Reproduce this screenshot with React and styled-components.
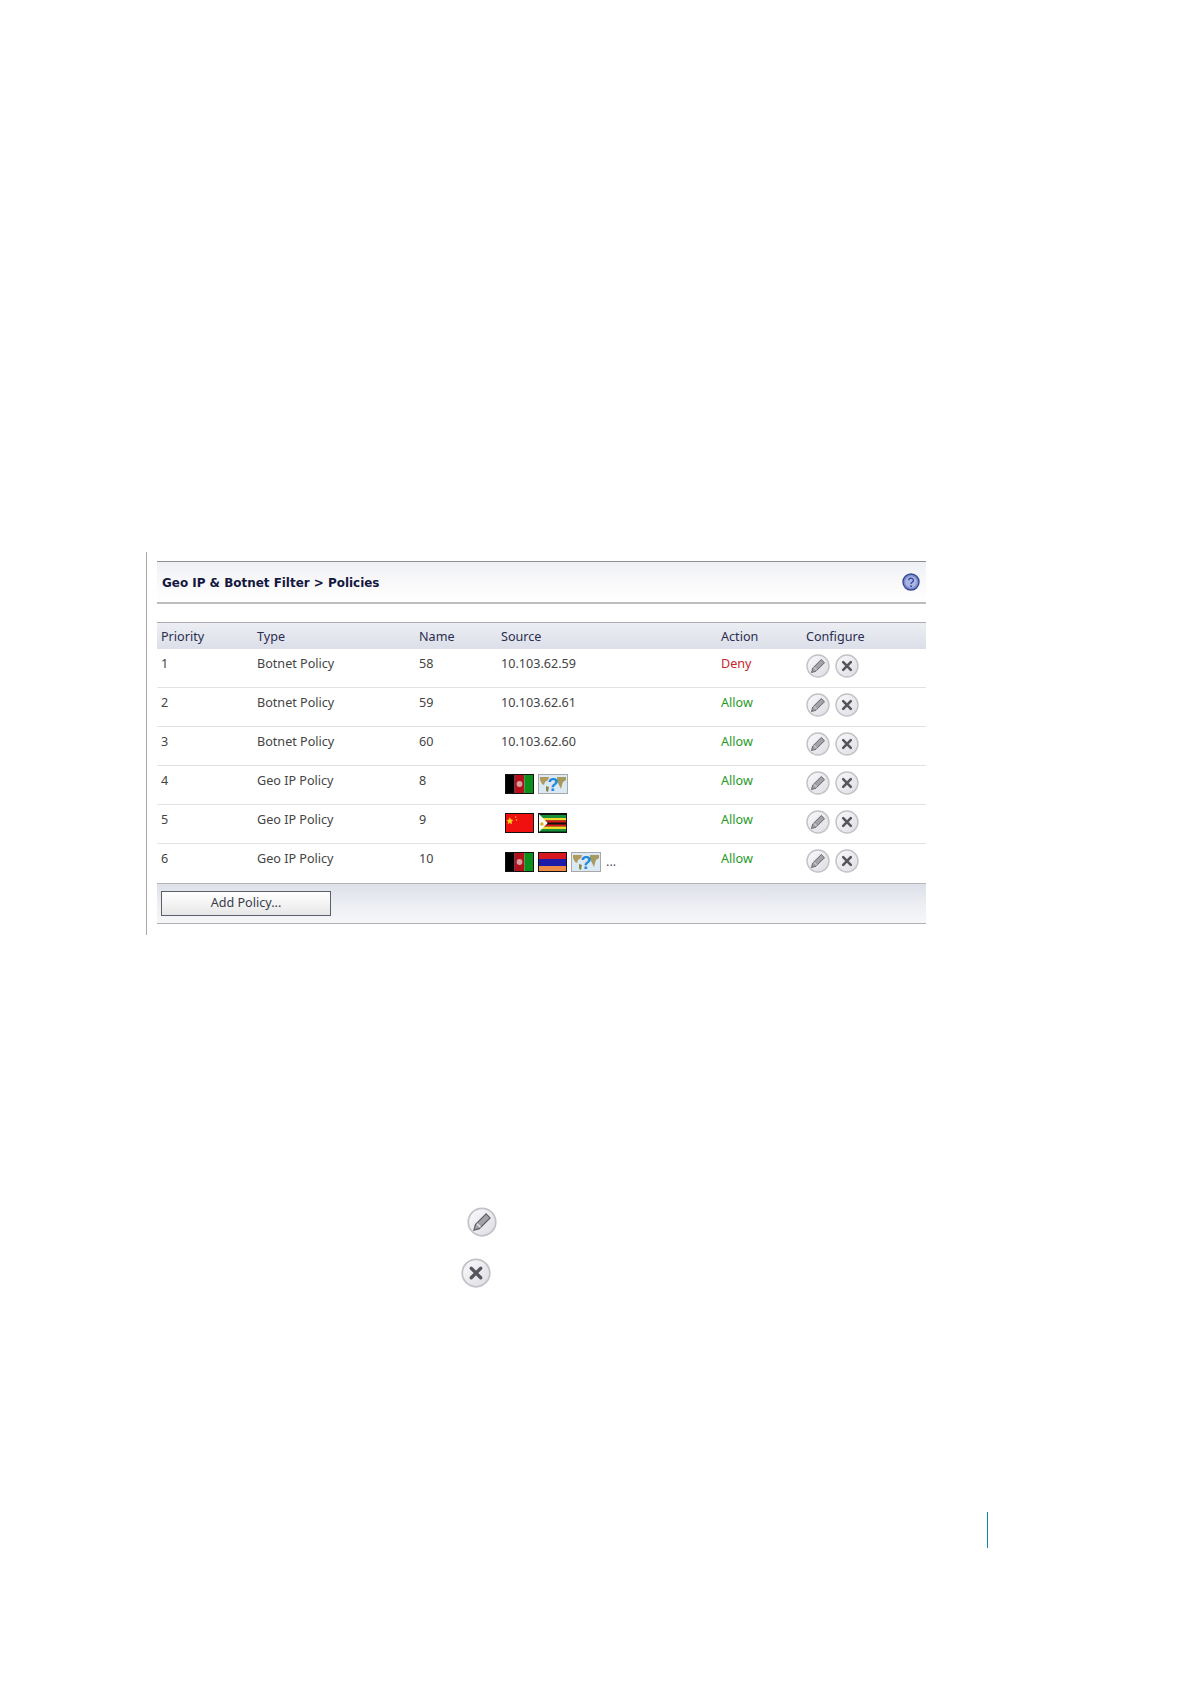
import React from 'react'
import styled, { createGlobalStyle } from 'styled-components'

const GlobalStyle = createGlobalStyle`
  html, body {
    margin: 0;
    background: #fff;
    font-family: 'Noto Sans', 'Open Sans', sans-serif;
  }
`

const Page = styled.div`
  width: 1190px;
  height: 1684px;
  padding-top: 552px;
  box-sizing: border-box;
  display: flex;
  flex-direction: column;
`

const Figure = styled.div`
  margin-left: 146px;
  width: 780px;
  height: 383px;
  padding: 9px 0 0 10px;
  box-sizing: border-box;
  border-left: 1px solid #a9a9a9;
`

const Panel = styled.div`
  width: 769px;
`

const TitleBar = styled.div`
  height: 43px;
  box-sizing: border-box;
  display: flex;
  align-items: center;
  justify-content: space-between;
  padding: 0 6px 0 5px;
  border-top: 1px solid #8f8f93;
  border-bottom: 2px solid #bdbdc0;
  background: linear-gradient(#eef0f5, #f8f8fa 45%, #fff);
`

const Title = styled.h1`
  margin: 2px 0 0;
  font-family: 'DejaVu Sans', sans-serif;
  font-size: 11.95px;
  font-weight: 700;
  color: #14183f;
`

const Table = styled.div`
  margin-top: 18px;
`

const columns = '96px 162px 82px 220px 85px 1fr'

const HeadRow = styled.div`
  display: grid;
  grid-template-columns: ${columns};
  height: 27px;
  align-items: center;
  padding-left: 4px;
  border-top: 1px solid #a9abb2;
  box-sizing: border-box;
  background: linear-gradient(#eceef3, #dcdfe9);
  color: #2b2d50;
  font-size: 12.6px;
`

const Row = styled.div`
  display: grid;
  grid-template-columns: ${columns};
  height: 39px;
  padding: 5px 0 0 4px;
  box-sizing: border-box;
  border-bottom: 1px solid #e2e2e4;
  color: #444;
  font-size: 12.6px;
  line-height: 20px;
  &:last-child {
    border-bottom: 0;
  }
`

const Action = styled.span`
  color: ${p => (p.$deny ? '#c8242c' : '#1f9a1f')};
`

const Flags = styled.div`
  display: flex;
  align-items: center;
  gap: 4px;
  height: 20px;
  margin: 3px 0 0 4px;
`

const Dots = styled.span`
  margin-left: 1px;
  color: #555;
  line-height: 24px;
`

const Icons = styled.div`
  display: flex;
  gap: 5px;
  margin-top: 0;
`

const Footer = styled.div`
  height: 41px;
  box-sizing: border-box;
  display: flex;
  align-items: center;
  padding-left: 4px;
  border-top: 1px solid #b3b5bb;
  border-bottom: 1px solid #b0b0b3;
  background: linear-gradient(#dde0e9, #eef0f4 60%, #f6f6f8);
`

const Button = styled.button`
  width: 170px;
  height: 25px;
  padding: 0 0 2px;
  border: 1px solid #5c6068;
  background: linear-gradient(#fff, #f4f4f4 50%, #e6e6e6);
  color: #3a3c4c;
  font-family: inherit;
  font-size: 12.6px;
  text-align: center;
`

const Legend = styled.div`
  display: flex;
  flex-direction: column;
  margin-top: 272px;
  gap: 21px;
`

const LegendItem = styled.div`
  height: 30px;
  margin-left: ${p => p.$indent}px;
`

const PageRule = styled.div`
  width: 1px;
  height: 36px;
  margin: 224px 0 0 987px;
  border-left: 1px solid #0d8ab0;
`

const CircleIcon = ({ size = 24, children }) => (
  <svg width={size} height={size} viewBox="0 0 24 24">
    <defs>
      <linearGradient id="disc" x1="0" y1="0" x2="1" y2="1">
        <stop offset="0" stopColor="#fbfbfd" />
        <stop offset="1" stopColor="#dcdce2" />
      </linearGradient>
    </defs>
    <circle cx="12" cy="12" r="11" fill="url(#disc)" stroke="#c2c2c8" strokeWidth="1.4" />
    {children}
  </svg>
)

const EditIcon = ({ size }) => (
  <CircleIcon size={size}>
    <path d="M5.5 18.5l1.2-4.4 8.6-8.6 3.2 3.2-8.6 8.6z" fill="#a2a2a8" stroke="#5c5c64" strokeWidth="0.9" />
    <path d="M8 13.4l2.8 2.8" stroke="#eeeef2" strokeWidth="0.9" />
  </CircleIcon>
)

const DeleteIcon = ({ size }) => (
  <CircleIcon size={size}>
    <path d="M8.2 8.2l7.6 7.6M15.8 8.2l-7.6 7.6" stroke="#55555c" strokeWidth="2.6" strokeLinecap="round" />
  </CircleIcon>
)

const HelpIcon = () => (
  <svg width="18" height="18" viewBox="0 0 18 18">
    <circle cx="9" cy="9" r="8" fill="#7f8fd0" stroke="#3a4a95" strokeWidth="1.4" />
    <circle cx="9" cy="9" r="5.8" fill="#a9b5e3" />
    <path d="M6.6 7.2a2.4 2.2 0 1 1 3.6 2c-.8.5-1.2.9-1.2 1.8" fill="none" stroke="#2f3f95" strokeWidth="1.2" />
    <circle cx="9" cy="13.2" r="0.9" fill="#2f3f95" />
  </svg>
)

const FlagFrame = ({ children }) => (
  <svg width="29" height="20" viewBox="0 0 30 20" preserveAspectRatio="none">
    {children}
    <rect x="0.5" y="0.5" width="29" height="19" fill="none" stroke="#111" />
  </svg>
)

const Afghanistan = () => (
  <FlagFrame>
    <rect width="10" height="20" fill="#000" />
    <rect x="10" width="10" height="20" fill="#b3101c" />
    <rect x="20" width="10" height="20" fill="#0c8f1c" />
    <circle cx="15" cy="10" r="3" fill="#d8a0a0" />
  </FlagFrame>
)

const China = () => (
  <FlagFrame>
    <rect width="30" height="20" fill="#f01010" />
    <path d="M5 4l1.2 2.6 2.4.3-1.8 1.8.5 2.6-2.3-1.3-2.3 1.3.5-2.6-1.5-1.8 2.4-.3z" fill="#f5d020" />
    <circle cx="11" cy="4" r="0.8" fill="#f5d020" />
    <circle cx="12" cy="7" r="0.8" fill="#f5d020" />
  </FlagFrame>
)

const Zimbabwe = () => (
  <FlagFrame>
    <rect width="30" height="20" fill="#111" />
    <rect y="2" width="30" height="3" fill="#16913a" />
    <rect y="5" width="30" height="2.5" fill="#f4d82a" />
    <rect y="7.5" width="30" height="2" fill="#d81a1a" />
    <rect y="11.5" width="30" height="2" fill="#d81a1a" />
    <rect y="13.5" width="30" height="2.5" fill="#f4d82a" />
    <rect y="16" width="30" height="2.5" fill="#16913a" />
    <path d="M1 1l9 9-9 9z" fill="#fbfbf4" />
    <circle cx="4" cy="11" r="1.8" fill="#d8b020" />
  </FlagFrame>
)

const Armenia = () => (
  <FlagFrame>
    <rect width="30" height="7" fill="#d81820" />
    <rect y="7" width="30" height="7" fill="#1c1ca8" />
    <rect y="14" width="30" height="6" fill="#ee8a48" />
  </FlagFrame>
)

const UnknownFlag = () => (
  <svg width="30" height="20" viewBox="0 0 30 20">
    <rect x="0.5" y="0.5" width="29" height="19" fill="#dbe9f4" stroke="#a8a8a8" />
    <path d="M2 3h9l-1 3-3 2-1 3-2-1-2-4z" fill="#b09a5c" />
    <path d="M19 3h9v3l-3 2-1 3-1 4-2-4-2-4z" fill="#a89a5c" />
    <path d="M8 12l3 1-1 5-2-1z" fill="#8a8a50" />
    <text x="15" y="16.5" textAnchor="middle" fontFamily="Liberation Sans, sans-serif" fontWeight="700" fontSize="18" fill="#2088e0">?</text>
  </svg>
)

const rows = [
  { priority: 1, type: 'Botnet Policy', name: 58, source: '10.103.62.59', action: 'Deny' },
  { priority: 2, type: 'Botnet Policy', name: 59, source: '10.103.62.61', action: 'Allow' },
  { priority: 3, type: 'Botnet Policy', name: 60, source: '10.103.62.60', action: 'Allow' },
  { priority: 4, type: 'Geo IP Policy', name: 8, flags: [Afghanistan, UnknownFlag], action: 'Allow' },
  { priority: 5, type: 'Geo IP Policy', name: 9, flags: [China, Zimbabwe], action: 'Allow' },
  { priority: 6, type: 'Geo IP Policy', name: 10, flags: [Afghanistan, Armenia, UnknownFlag], more: true, action: 'Allow' },
]

export default function App() {
  return (
    <Page>
      <GlobalStyle />
      <Figure>
        <Panel>
          <TitleBar>
            <Title>Geo IP &amp; Botnet Filter &gt; Policies</Title>
            <HelpIcon />
          </TitleBar>
          <Table>
            <HeadRow>
              <span>Priority</span>
              <span>Type</span>
              <span>Name</span>
              <span>Source</span>
              <span>Action</span>
              <span>Configure</span>
            </HeadRow>
            {rows.map(row => (
              <Row key={row.priority}>
                <span>{row.priority}</span>
                <span>{row.type}</span>
                <span>{row.name}</span>
                {row.flags ? (
                  <Flags>
                    {row.flags.map((Flag, i) => <Flag key={i} />)}
                    {row.more && <Dots>...</Dots>}
                  </Flags>
                ) : (
                  <span>{row.source}</span>
                )}
                <Action $deny={row.action === 'Deny'}>{row.action}</Action>
                <Icons>
                  <EditIcon />
                  <DeleteIcon />
                </Icons>
              </Row>
            ))}
          </Table>
          <Footer>
            <Button>Add Policy...</Button>
          </Footer>
        </Panel>
      </Figure>
      <Legend>
        <LegendItem $indent={467}><EditIcon size={30} /></LegendItem>
        <LegendItem $indent={461}><DeleteIcon size={30} /></LegendItem>
      </Legend>
      <PageRule />
    </Page>
  )
}
